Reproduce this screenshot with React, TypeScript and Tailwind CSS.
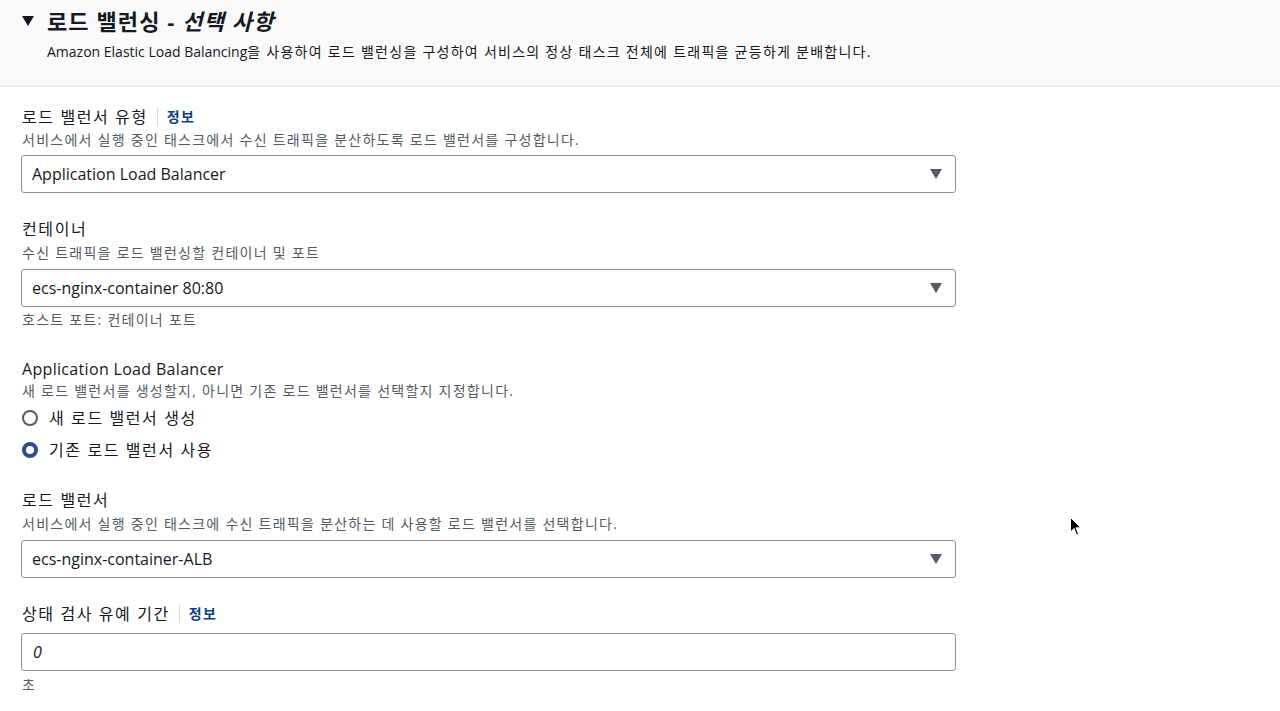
const font = { fontFamily: '"Open Sans", "Noto Sans CJK KR", sans-serif' }

function Caret() {
  return (
    <svg viewBox="0 0 12 10" className="h-[10px] w-[12px]" aria-hidden="true">
      <path d="M0 0H12L6 10Z" fill="#545b64" />
    </svg>
  )
}

function InfoLink() {
  return (
    <>
      <span className="mx-[9px] h-[18px] w-px bg-[#d5dbdb]" />
      <span className="text-[14px] font-bold tracking-[0.09em] text-[#0b3f7d]">정보</span>
    </>
  )
}

function Select({ value }: { value: string }) {
  return (
    <div className="ml-[-1px] flex h-[38px] w-[935px] items-center justify-between rounded-[3px] border border-[#879596] bg-white pl-[10px] pr-[13px]">
      <span className="text-[16px] text-[#16191f]">{value}</span>
      <Caret />
    </div>
  )
}

function Radio({ checked, label }: { checked?: boolean; label: string }) {
  return (
    <div className="flex h-[32px] items-center gap-[11px]">
      {checked ? (
        <span className="h-[16px] w-[16px] rounded-full border-[4px] border-[#2a4f8c] bg-white" />
      ) : (
        <span className="h-[16px] w-[16px] rounded-full border-[2px] border-[#545b64] bg-white" />
      )}
      <span className="text-[16px] tracking-[0.1em] text-[#16191f]">{label}</span>
    </div>
  )
}

export default function App() {
  return (
    <div className="relative h-[711px] w-[1280px] overflow-hidden bg-white text-[#16191f]" style={font}>
      <div className="h-[87px] border-b-2 border-[#eeeeee] bg-[#fafafa] pl-[22px] pt-[7px]">
        <div className="flex items-center gap-[13px]">
          <svg viewBox="0 0 12 10" className="h-[10px] w-[12px]" aria-hidden="true">
            <path d="M0 0H12L6 10Z" fill="#16191f" />
          </svg>
          <h2 className="text-[22px] font-bold leading-[28px] tracking-[0.05em]">
            로드 밸런싱 - <i>선택 사항</i>
          </h2>
        </div>
        <p className="mt-[7px] pl-[25px] text-[14px] leading-[20px] text-[#16191f]">
          Amazon Elastic Load Balancing
          <span className="tracking-[0.09em]">
            을 사용하여 로드 밸런싱을 구성하여 서비스의 정상 태스크 전체에 트래픽을 균등하게 분배합니다.
          </span>
        </p>
      </div>

      <div className="pl-[22px]">
        <div className="mt-[19px] flex items-center text-[16px] leading-[22px] tracking-[0.1em]">
          로드 밸런서 유형
          <InfoLink />
        </div>
        <p className="mt-[2px] text-[14px] leading-[20px] tracking-[0.09em] text-[#545b64]">
          서비스에서 실행 중인 태스크에서 수신 트래픽을 분산하도록 로드 밸런서를 구성합니다.
        </p>
        <div className="mt-[5px]">
          <Select value="Application Load Balancer" />
        </div>

        <div className="mt-[25px] text-[16px] leading-[22px] tracking-[0.1em]">컨테이너</div>
        <p className="mt-[3px] text-[14px] leading-[20px] tracking-[0.09em] text-[#545b64]">
          수신 트래픽을 로드 밸런싱할 컨테이너 및 포트
        </p>
        <div className="mt-[6px]">
          <Select value="ecs-nginx-container 80:80" />
        </div>
        <p className="mt-[3px] text-[14px] leading-[20px] tracking-[0.09em] text-[#545b64]">호스트 포트: 컨테이너 포트</p>

        <div className="mt-[28px] text-[16px] leading-[22px] tracking-[0.02em]">Application Load Balancer</div>
        <p className="mt-[1px] text-[14px] leading-[20px] tracking-[0.09em] text-[#545b64]">
          새 로드 밸런서를 생성할지, 아니면 기존 로드 밸런서를 선택할지 지정합니다.
        </p>
        <div className="mt-[1px]">
          <Radio label="새 로드 밸런서 생성" />
          <Radio checked label="기존 로드 밸런서 사용" />
        </div>

        <div className="mt-[23px] text-[16px] leading-[22px] tracking-[0.1em]">로드 밸런서</div>
        <p className="mt-[3px] text-[14px] leading-[20px] tracking-[0.09em] text-[#545b64]">
          서비스에서 실행 중인 태스크에 수신 트래픽을 분산하는 데 사용할 로드 밸런서를 선택합니다.
        </p>
        <div className="mt-[6px]">
          <Select value="ecs-nginx-container-ALB" />
        </div>

        <div className="mt-[25px] flex items-center text-[16px] leading-[22px] tracking-[0.1em]">
          상태 검사 유예 기간
          <InfoLink />
        </div>
        <div className="mt-[8px] ml-[-1px] flex h-[38px] w-[935px] items-center rounded-[3px] border border-[#879596] bg-white pl-[11px]">
          <span className="text-[16px] italic text-[#16191f]">0</span>
        </div>
        <p className="mt-[4px] text-[14px] leading-[20px] text-[#545b64]">초</p>
      </div>

      <svg viewBox="0 0 12 20" className="absolute left-[1070px] top-[517px] h-[20px] w-[12px]" aria-hidden="true">
        <path d="M0.5 0.5V15L4 11.5L6.5 18L8.5 17L6 10.8H10.8Z" fill="#000" stroke="#fff" strokeWidth="1" />
      </svg>
    </div>
  )
}
